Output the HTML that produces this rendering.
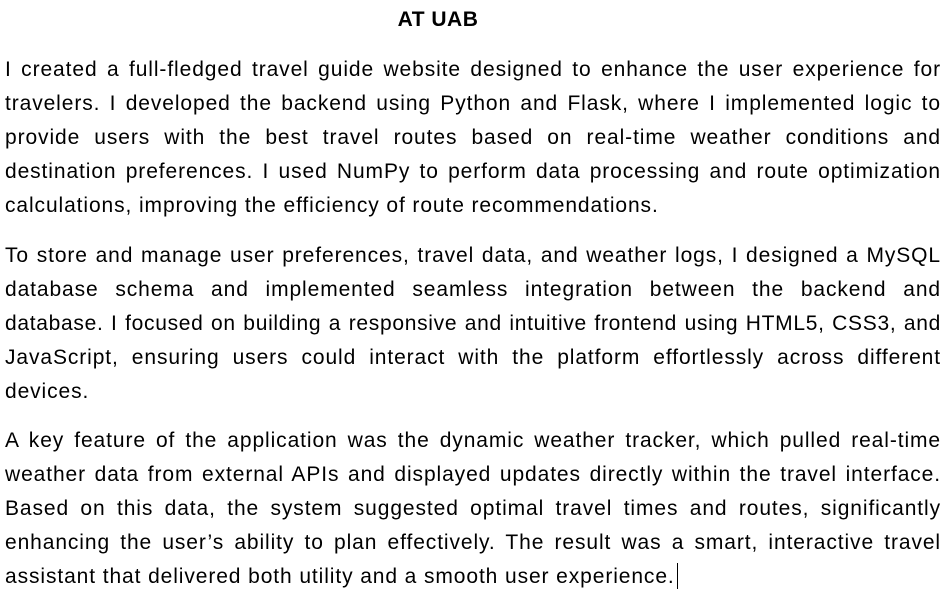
<!DOCTYPE html>
<html><head><meta charset="utf-8"><style>
html,body{margin:0;padding:0;background:#fff;}
body{width:948px;height:607px;overflow:hidden;position:relative;font-family:"Liberation Sans",sans-serif;color:#000;}
.t{position:absolute;top:8px;left:0;width:876px;text-align:center;font-weight:bold;font-size:21px;letter-spacing:0.5px;}
.l{position:absolute;left:5px;width:936px;font-size:21px;letter-spacing:0.9px;line-height:28px;white-space:nowrap;text-align:justify;text-align-last:justify;}
.e{text-align:left;text-align-last:left;}
.cur{display:inline-block;width:1px;height:26px;background:#000;vertical-align:-6px;margin-left:2px;}
</style></head><body>
<div class="t">AT UAB</div>
<div class="l" style="top:56px">I created a full-fledged travel guide website designed to enhance the user experience for</div>
<div class="l" style="top:90px">travelers. I developed the backend using Python and Flask, where I implemented logic to</div>
<div class="l" style="top:124px">provide users with the best travel routes based on real-time weather conditions and</div>
<div class="l" style="top:158px">destination preferences. I used NumPy to perform data processing and route optimization</div>
<div class="l e" style="top:192px">calculations, improving the efficiency of route recommendations.</div>
<div class="l" style="top:242px">To store and manage user preferences, travel data, and weather logs, I designed a MySQL</div>
<div class="l" style="top:276px">database schema and implemented seamless integration between the backend and</div>
<div class="l" style="top:310px;letter-spacing:0.7px">database. I focused on building a responsive and intuitive frontend using HTML5, CSS3, and</div>
<div class="l" style="top:344px">JavaScript, ensuring users could interact with the platform effortlessly across different</div>
<div class="l e" style="top:378px">devices.</div>
<div class="l" style="top:427px">A key feature of the application was the dynamic weather tracker, which pulled real-time</div>
<div class="l" style="top:461px">weather data from external APIs and displayed updates directly within the travel interface.</div>
<div class="l" style="top:495px">Based on this data, the system suggested optimal travel times and routes, significantly</div>
<div class="l" style="top:529px">enhancing the user’s ability to plan effectively. The result was a smart, interactive travel</div>
<div class="l e" style="top:563px">assistant that delivered both utility and a smooth user experience.<span class="cur"></span></div>
</body></html>
